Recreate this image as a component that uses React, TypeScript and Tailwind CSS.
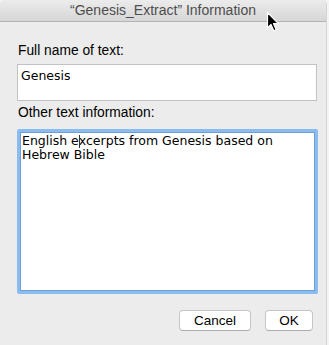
export default function App() {
  return (
    <div className="relative w-[329px] h-[345px] bg-[#f4f4f4] font-['Liberation_Sans',Arial,sans-serif]">
      <div className="flex flex-col h-full w-[327px] rounded-t-[5px] bg-[#ececec] border-r border-[#d4d4d4] overflow-hidden">
        <div className="h-[22px] shrink-0 border-b border-[#b4b4b4] bg-gradient-to-b from-[#ececec] to-[#d6d6d6] text-center text-[14px] leading-[21px] text-[#4d4d4d]">
          “Genesis_Extract” Information
        </div>

        <div className="flex flex-col pl-[17px]">
          <p className="mt-[21px] h-[16px] pl-[1px] text-[13.8px] leading-[16px] text-black">
            Full name of text:
          </p>
          <div className="mt-[5px] h-[37px] w-[300px] border border-[#c2c2c2] bg-white px-[3px] pt-[3px] text-[12.5px] leading-[15px] text-black font-['DejaVu_Sans',sans-serif]">
            Genesis
          </div>
          <p className="mt-[4px] h-[16px] pl-[1px] text-[13.8px] leading-[16px] text-black">
            Other text information:
          </p>
          <div className="mt-[8px] h-[165px] w-[301px] rounded-[2px] border-[3px] border-[#8bbcef] bg-white">
            <div className="h-full border border-[#6d9fd6] px-[1px] pt-[1px] text-[12.5px] leading-[14px] text-black font-['DejaVu_Sans',sans-serif]">
              English e
              <span className="relative inline-block w-0 align-top">
                <span className="absolute left-0 top-[1px] h-[13px] w-px bg-[#333]" />
              </span>
              xcerpts from Genesis based on
              <br />
              Hebrew Bible
            </div>
          </div>

          <div className="mt-[16px] flex w-[296px] justify-end gap-[14px]">
            <button className="h-[21px] w-[72px] rounded-[4px] border border-[#c6c6c6] border-b-[#acacac] bg-white text-[13.5px] leading-[19px] text-black">
              Cancel
            </button>
            <button className="h-[21px] w-[48px] rounded-[4px] border border-[#c6c6c6] border-b-[#acacac] bg-white text-[13.5px] leading-[19px] text-black">
              OK
            </button>
          </div>
        </div>
      </div>

      <svg className="absolute left-[266px] top-[11px]" width="16" height="22" viewBox="0 0 16 22">
        <path
          d="M1.5 1.5 L1.5 17 L5 13.5 L7.8 19.8 L10.2 18.8 L7.5 12.6 L12.4 12.6 Z"
          fill="black"
          stroke="white"
          strokeWidth="1.2"
          strokeLinejoin="round"
        />
      </svg>
    </div>
  );
}
